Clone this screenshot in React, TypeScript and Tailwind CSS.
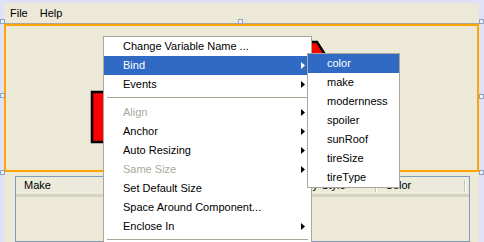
import React from "react";

const font = { fontFamily: '"Liberation Sans", Arial, sans-serif' };

function Arrow({ white }: { white?: boolean }) {
  return (
    <svg width="4" height="7" viewBox="0 0 4 7" className="shrink-0">
      <polygon points="0,0 4,3.5 0,7" fill={white ? "#ffffff" : "#000000"} />
    </svg>
  );
}

type Item = { label: string; sub?: boolean; disabled?: boolean; active?: boolean; sep?: boolean; blank?: boolean };

const mainItems: Item[] = [
  { label: "Change Variable Name ..." },
  { label: "Bind", sub: true, active: true },
  { label: "Events", sub: true },
  { label: "", sep: true },
  { label: "Align", sub: true, disabled: true },
  { label: "Anchor", sub: true },
  { label: "Auto Resizing", sub: true },
  { label: "Same Size", sub: true, disabled: true },
  { label: "Set Default Size" },
  { label: "Space Around Component..." },
  { label: "Enclose In", sub: true },
  { label: "", sep: true },
  { label: "", blank: true },
];

const subItems: Item[] = [
  { label: "color", active: true },
  { label: "make" },
  { label: "modernness" },
  { label: "spoiler" },
  { label: "sunRoof" },
  { label: "tireSize" },
  { label: "tireType" },
];

function MenuRow({ item }: { item: Item }) {
  if (item.sep) {
    return (
      <div className="h-[9px] pt-[3px] px-[3px]">
        <div className="h-px bg-[#aca899]" />
      </div>
    );
  }
  if (item.blank) return <div className="h-[19px]" />;
  const color = item.active ? "text-white" : item.disabled ? "text-[#aca899]" : "text-black";
  return (
    <div
      className={`h-[19px] flex items-center pl-[19px] pr-[6px] text-[11px] ${color} ${
        item.active ? "bg-[#316ac5]" : ""
      }`}
    >
      <span className="flex-1 whitespace-nowrap">{item.label}</span>
      {item.sub && <Arrow white={item.active} />}
    </div>
  );
}

function Handle({ className }: { className: string }) {
  return (
    <div
      className={`absolute w-[5px] h-[5px] border border-[#8fa4c0] bg-[#eef2f8] ${className}`}
    />
  );
}

const cols = [
  { label: "Make", w: "w-[90px]" },
  { label: "", w: "w-[90px]" },
  { label: "", w: "w-[89px]" },
  { label: "Body Style", w: "w-[92px]" },
  { label: "Color", w: "w-[89px]" },
];

export default function App() {
  return (
    <div
      className="relative w-[484px] h-[242px] overflow-hidden bg-[#e0e0f8] pt-[3px] pl-[4px] pr-[5px]"
      style={font}
    >
      <div className="h-full bg-[#ece9d8] flex flex-col">
        {/* menubar */}
        <div className="h-[21px] border-b border-[#aca899] flex items-center text-[11px] text-black shrink-0">
          <span className="px-[6px]">File</span>
          <span className="px-[6px]">Help</span>
        </div>
        {/* design frame */}
        <div className="relative h-[148px] border-2 border-[#ffa500] shrink-0">
          <svg className="absolute left-0 top-0" width="472" height="144" viewBox="0 0 472 144">
            <path
              d="M86,66 L154,66 L179,16 L311,16 L318,27 L324,34 L324,116 L86,116 Z"
              fill="#ff0000"
              stroke="#000000"
              strokeWidth="2.5"
              strokeLinejoin="miter"
            />
          </svg>
        </div>
        {/* table area */}
        <div className="flex-1 pt-[4px] pl-[11px] flex flex-col min-h-0">
          <div className="w-[455px] flex-1 border border-[#7f9db9] bg-[#ece9d8]">
            <div className="flex h-[20px] border-b-[3px] border-[#d6d2c2] bg-[#ebeadb]">
              {cols.map((c, i) => (
                <div key={i} className={`${c.w} relative flex items-center pl-[8px] text-[11px] text-black whitespace-nowrap`}>
                  {c.label}
                  <div className="absolute right-0 top-[3px] bottom-[2px] w-[2px] border-l border-[#c7c5b2] border-r border-r-white" />
                </div>
              ))}
            </div>
          </div>
        </div>
      </div>

      {/* selection handles */}
      <Handle className="left-0 top-[19px]" />
      <Handle className="left-[238px] top-[19px]" />
      <Handle className="left-[479px] top-[19px]" />
      <Handle className="left-0 top-[93px]" />
      <Handle className="left-[479px] top-[94px]" />
      <Handle className="left-0 top-[170px]" />
      <Handle className="left-[479px] top-[170px]" />

      {/* main context menu */}
      <div className="absolute left-[103px] top-[36px] w-[209px] bg-white border border-[#aca899]">
        {mainItems.map((it, i) => (
          <MenuRow key={i} item={it} />
        ))}
      </div>

      {/* submenu */}
      <div className="absolute left-[307px] top-[53px] w-[93px] bg-white border border-[#aca899]">
        {subItems.map((it, i) => (
          <MenuRow key={i} item={it} />
        ))}
      </div>
    </div>
  );
}
